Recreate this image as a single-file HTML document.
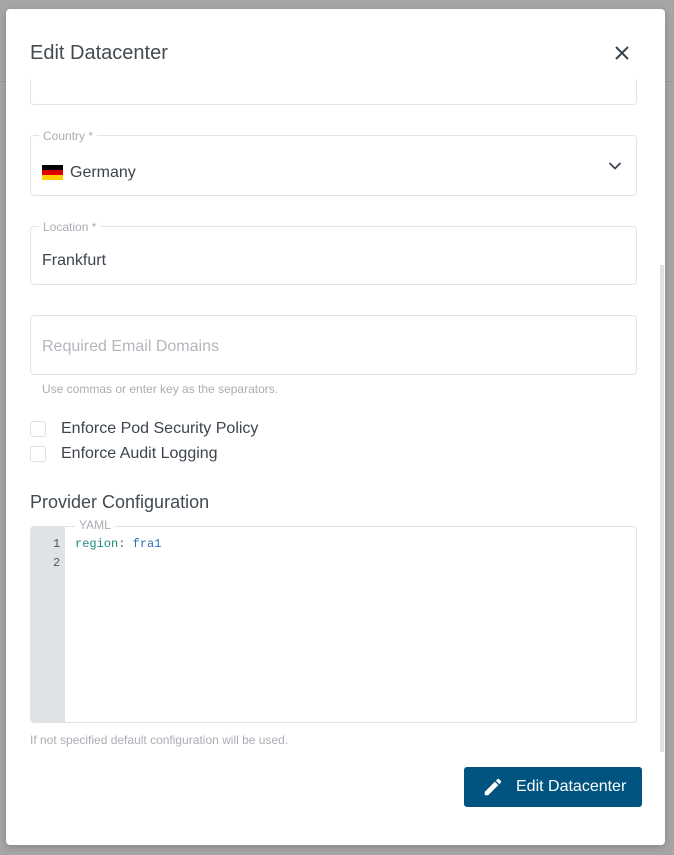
<!DOCTYPE html>
<html><head><meta charset="utf-8"><style>
*{box-sizing:border-box;margin:0;padding:0}
body{width:674px;height:855px;background:#a6a6a6;position:relative;overflow:hidden;font-family:"Liberation Sans",sans-serif;color:#3d444d}
.bgl{position:absolute;left:0;width:674px;height:1px;background:#9a9a9a}
.dlg{position:absolute;left:6px;top:9px;width:659px;height:836px;background:#fff;border-radius:4px;box-shadow:0 2px 8px rgba(0,0,0,.2);overflow:hidden}
.a{position:absolute}
.box{position:absolute;left:24px;width:607px;border:1px solid #e1e3e6;border-radius:4px}
.lbl{position:absolute;top:-7px;left:8px;background:#fff;padding:0 4px;font-size:12px;color:#a9adb3}
.cb{position:absolute;left:24px;width:16px;height:16px;border:1.5px solid #dde0e4;border-radius:3px}
</style></head><body>
<div class="bgl" style="top:81px;background:#999"></div>
<div class="dlg">
<div class="a" style="left:24px;top:33px;font-size:20px;color:#434a52">Edit Datacenter</div>
<svg class="a" style="left:608px;top:36px" width="16" height="16" viewBox="0 0 16 16"><path d="M2 2L14 14M14 2L2 14" stroke="#3d444d" stroke-width="2"/></svg>
<div class="box" style="top:70px;height:26px;border-top:none;border-radius:0 0 4px 4px"></div>
<div class="box" style="top:126px;height:61px">
<div class="lbl">Country *</div>
<div class="a" style="left:11px;top:29px;width:21px;height:15px"><div style="height:5px;background:#000"></div><div style="height:5px;background:#dd0000"></div><div style="height:5px;background:#ffce00"></div></div>
<div class="a" style="left:39px;top:28px;font-size:16px">Germany</div>
<svg class="a" style="left:577px;top:25px" width="14" height="10" viewBox="0 0 14 10"><path d="M1.5 2L7 7.5L12.5 2" stroke="#3d444d" stroke-width="1.8" fill="none"/></svg>
</div>
<div class="box" style="top:217px;height:59px">
<div class="lbl">Location *</div>
<div class="a" style="left:11px;top:25px;font-size:16px">Frankfurt</div>
</div>
<div class="box" style="top:306px;height:60px">
<div class="a" style="left:11px;top:22px;font-size:16px;color:#b3b7bc">Required Email Domains</div>
</div>
<div class="a" style="left:36px;top:373px;font-size:12px;color:#a9adb3">Use commas or enter key as the separators.</div>
<div class="cb" style="top:412px"></div>
<div class="a" style="left:55px;top:411px;font-size:16px">Enforce Pod Security Policy</div>
<div class="cb" style="top:437px"></div>
<div class="a" style="left:55px;top:436px;font-size:16px">Enforce Audit Logging</div>
<div class="a" style="left:24px;top:483px;font-size:18px;color:#434a52">Provider Configuration</div>
<div class="box" style="top:517px;height:197px;overflow:visible">
<div class="a" style="left:0;top:0;width:34px;height:195px;background:#e0e3e6;border-radius:3px 0 0 3px"></div>
<div class="lbl" style="left:44px;top:-9px">YAML</div>
<div class="a" style="left:22px;top:10px;font:12px 'Liberation Mono',monospace;color:#555">1</div>
<div class="a" style="left:22px;top:29px;font:12px 'Liberation Mono',monospace;color:#555">2</div>
<div class="a" style="left:44px;top:10px;font:12px 'Liberation Mono',monospace"><span style="color:#1a8a7a">region</span><span style="color:#555">:</span> <span style="color:#2a6fb5">fra1</span></div>
</div>
<div class="a" style="left:24px;top:724px;font-size:12px;color:#a9adb3">If not specified default configuration will be used.</div>
<div class="a" style="left:654px;top:256px;width:4px;height:487px;background:#e0e0e0"></div>
<div class="a" style="left:458px;top:758px;width:178px;height:40px;background:#00547f;border-radius:3px">
<svg class="a" style="left:18px;top:9px" width="22" height="22" viewBox="0 0 24 24"><path d="M3 17.25V21h3.75L17.81 9.94l-3.75-3.75L3 17.25zM20.71 7.04a1 1 0 0 0 0-1.41l-2.34-2.34a1 1 0 0 0-1.41 0l-1.83 1.83 3.75 3.75 1.83-1.83z" fill="#fff"/></svg>
<div class="a" style="left:52px;top:11px;font-size:16px;color:#fff">Edit Datacenter</div>
</div>
</div>
</body></html>
